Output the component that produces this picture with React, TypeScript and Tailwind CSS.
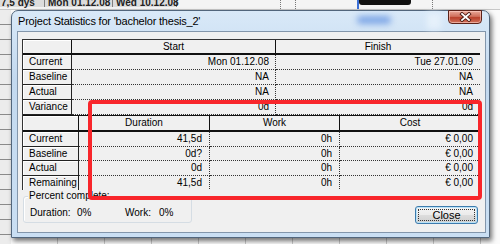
const font = "font-['Liberation_Sans',Arial,sans-serif]";

const Background = () => {
    return (
        <div className="flex flex-col w-[500px] h-[244px]">
            {/* top strip of the gantt view behind */}
            <div className="flex h-[10px] bg-[#f4f4f4] border-b border-[#c8c8c8] overflow-hidden whitespace-nowrap">
                <div className="w-[45px] shrink-0 bg-[#dcdcdc] border-r border-[#808080] text-[10px] font-bold leading-[10px] text-[#222] pl-[1px] -translate-y-[2px]">7,5 dys</div>
                <div className="w-[68px] shrink-0 bg-[#dcdcdc] border-r border-[#808080] text-[10px] font-bold leading-[10px] text-[#222] pl-[3px] -translate-y-[2px]">Mon 01.12.08</div>
                <div className="w-[64px] shrink-0 bg-[#dcdcdc] border-r border-[#808080] text-[10px] font-bold leading-[10px] text-[#222] pl-[3px] -translate-y-[2px]">Wed 10.12.08</div>
                <div className="w-[104px] shrink-0 border-r border-dotted border-[#777]" />
                <div className="w-[15px] shrink-0 border-r border-dotted border-[#777]" />
                <div className="w-[63px] shrink-0 border-r-2 border-[#3b6fd6]" />
                <div className="w-[52px] shrink-0 flex items-start">
                    <div className="w-full h-[5px] bg-[#111] rounded-b-[3px]" />
                </div>
                <div className="w-[22px] shrink-0 border-r border-dotted border-[#777]" />
            </div>
            <div className="flex flex-1">
                <div className="w-[11px] bg-[repeating-linear-gradient(to_bottom,#ececec_0px,#ececec_14px,#8a8a8a_14px,#8a8a8a_15px)]" />
                <div className="flex-1 bg-[repeating-linear-gradient(to_right,#fbfbfb_0px,#fbfbfb_46px,#c9c9c9_46px,#c9c9c9_47px)]" />
            </div>
        </div>
    );
};

const Table1 = () => {
    const rows = [
        { label: "Current", start: "Mon 01.12.08", finish: "Tue 27.01.09" },
        { label: "Baseline", start: "NA", finish: "NA" },
        { label: "Actual", start: "NA", finish: "NA" },
        { label: "Variance", start: "0d", finish: "0d" },
    ];

    return (
        <div className="grid grid-cols-[49px_204px_204px]">
            {/* Head */}
            <div className="h-[15px] border-r border-b-2 border-[#111] shadow-[inset_1px_1px_0_#fff]" />
            <div className="h-[15px] border-r border-b-2 border-[#111] text-center leading-[13px]">Start</div>
            <div className="h-[15px] border-b-2 border-[#111] text-center leading-[13px]">Finish</div>

            {/* Body */}
            {rows.map((row) => (
                <>
                    <div key={row.label} className="h-[15px] border-r border-b border-[#222] shadow-[inset_1px_1px_0_#fff] pl-[6px] leading-[14px]">
                        {row.label}
                    </div>
                    <div className="h-[15px] border-r border-b border-dotted border-[#333] text-right pr-[6px] leading-[14px]">
                        {row.start}
                    </div>
                    <div className="h-[15px] border-b border-dotted border-[#333] text-right pr-[7px] leading-[14px]">
                        {row.finish}
                    </div>
                </>
            ))}
        </div>
    );
};

const Table2 = () => {
    const rows = [
        { label: "Current", duration: "41,5d", work: "0h", cost: "€ 0,00", h: "h-[15px]" },
        { label: "Baseline", duration: "0d?", work: "0h", cost: "€ 0,00", h: "h-[14px]" },
        { label: "Actual", duration: "0d", work: "0h", cost: "€ 0,00", h: "h-[15px]" },
        { label: "Remaining", duration: "41,5d", work: "0h", cost: "€ 0,00", h: "h-[15px]" },
    ];

    return (
        <div className="grid grid-cols-[56px_131px_130px_140px] border-t border-[#111]">
            {/* Head */}
            <div className="h-[16px] border-r border-b-2 border-[#111] shadow-[inset_1px_1px_0_#fff]" />
            <div className="h-[16px] border-r border-b-2 border-[#111] text-center leading-[14px]">Duration</div>
            <div className="h-[16px] border-r border-b-2 border-[#111] text-center leading-[14px]">Work</div>
            <div className="h-[16px] border-b-2 border-[#111] text-center leading-[14px]">Cost</div>

            {/* Body */}
            {rows.map((row) => (
                <>
                    <div key={row.label} className={`${row.h} border-r border-b border-[#222] shadow-[inset_1px_1px_0_#fff] pl-[6px] leading-[13px]`}>
                        {row.label}
                    </div>
                    <div className={`${row.h} border-r border-b border-dotted border-[#333] text-right pr-[7px] leading-[13px]`}>
                        {row.duration}
                    </div>
                    <div className={`${row.h} border-r border-b border-dotted border-[#333] text-right pr-[7px] leading-[13px]`}>
                        {row.work}
                    </div>
                    <div className={`${row.h} border-b border-dotted border-[#333] text-right pr-[7px] leading-[13px]`}>
                        {row.cost}
                    </div>
                </>
            ))}
        </div>
    );
};

const Dialog = () => {
    return (
        <div className="absolute left-[11px] top-[10px] w-[479px] h-[228px] flex flex-col rounded-t-[7px] border border-[#52667c] bg-[linear-gradient(to_bottom,#d9e9f8,#c3d9ef_30%,#cadff3)] shadow-[2px_3px_5px_rgba(0,0,0,0.55)]">
            {/* Title bar */}
            <div className="relative h-[20px] flex items-center pl-[6px]">
                <div className="absolute left-[345px] top-[5px] w-[34px] h-[8px] rounded-full bg-[#7ea6e6] blur-[3px]" />
                <div className="absolute left-[415px] top-[2px] w-[14px] h-[16px] bg-[#e6f1fb] blur-[3px]" />
                <span className="relative text-[11px] tracking-[-0.2px] text-[#000]">Project Statistics for 'bachelor thesis_2'</span>
                {/* close X */}
                <div className="absolute right-[7px] -top-px w-[34px] h-[14px] rounded-b-[4px] border border-[#5b2219] bg-[linear-gradient(to_bottom,#e9a999,#d0705c_45%,#b9412b_55%,#d2735d)] flex items-center justify-center shadow-[inset_0_0_0_1px_rgba(255,210,200,0.6)]">
                    <svg width="13" height="10" viewBox="0 0 13 10">
                        <path d="M3 2 L10 8 M10 2 L3 8" stroke="#4a1a12" strokeWidth="3.6" strokeLinecap="square" />
                        <path d="M3 2 L10 8 M10 2 L3 8" stroke="#fff" strokeWidth="1.8" strokeLinecap="square" />
                    </svg>
                </div>
            </div>

            {/* Client area */}
            <div className="flex-1 ml-[5px] mr-[3px] mb-[4px] border border-[#8396ab] bg-[#f0f0f0] pl-[4px] pt-[7px] text-[10px] text-[#000] flex flex-col">
                <div className="w-[458px] h-[151px] border-l border-t border-[#333] overflow-hidden">
                    <Table1 />
                    <Table2 />
                </div>

                <div className="flex items-start">
                    {/* Percent complete */}
                    <div className="relative ml-[1px] mt-[6px] w-[169px] h-[27px] rounded-[3px] border border-[#d5dde4] shadow-[inset_1px_1px_0_#fff]">
                        <span className="absolute -top-[7px] left-[4px] px-[1px] bg-[#f0f0f0] leading-[12px]">Percent complete:</span>
                        <div className="flex pl-[6px] pt-[10px] leading-[12px]">
                            <span className="w-[47px]">Duration:</span>
                            <span className="w-[48px]">0%</span>
                            <span className="w-[34px]">Work:</span>
                            <span>0%</span>
                        </div>
                    </div>

                    {/* Close button */}
                    <button className="ml-auto mr-[7px] mt-[16px] w-[63px] h-[18px] rounded-[3px] border border-[#3d7bad] bg-[linear-gradient(to_bottom,#f4f4f4,#ebebeb_48%,#dcdcdc_52%,#cfcfcf)] p-[2px] shadow-[inset_0_0_0_1px_#b9e2f7]">
                        <div className="w-full h-full border border-dotted border-[#333] flex items-center justify-center text-[11px] leading-[11px] text-[#000]">
                            Close
                        </div>
                    </button>
                </div>
            </div>
        </div>
    );
};

const App = () => {
    return (
        <div className={`relative w-[500px] h-[244px] overflow-hidden bg-[#f7f7f7] ${font}`}>
            <Background />
            <Dialog />
            {/* red highlight drawn over the dialog */}
            <div className="absolute left-[88px] top-[100px] w-[394px] h-[100px] rounded-[4px] border-[4px] border-[#f8262b]" />
        </div>
    );
};

export default App;
